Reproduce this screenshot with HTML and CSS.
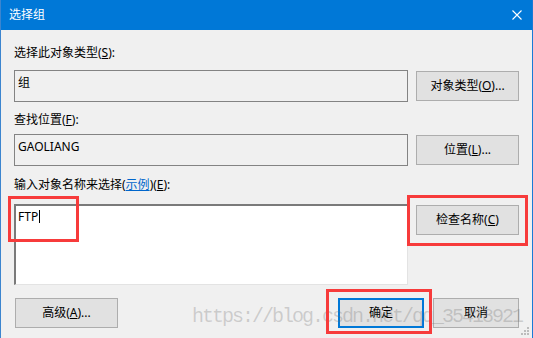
FILE: index.html
```html
<!DOCTYPE html>
<html lang="zh-CN">
<head>
    <meta charset="UTF-8">
    <title>选择组</title>
    <link rel="stylesheet" href="styles.css">
</head>
<body>
    <div class="dialog">
        <div class="titlebar">
            <span class="title">选择组</span>
            <svg class="close" width="10" height="10" viewBox="0 0 10 10">
                <path d="M0.5 0.5 L9.5 9.5 M9.5 0.5 L0.5 9.5" stroke="#fff" stroke-width="1.1" fill="none"/>
            </svg>
        </div>

        <div class="content">
            <div class="label label-first">选择此对象类型(<u>S</u>):</div>
            <div class="row">
                <div class="field">组</div>
                <button class="btn">对象类型(<u>O</u>)...</button>
            </div>

            <div class="label label-second">查找位置(<u>F</u>):</div>
            <div class="row">
                <div class="field">GAOLIANG</div>
                <button class="btn">位置(<u>L</u>)...</button>
            </div>

            <div class="label label-third">输入对象名称来选择(<a href="#">示例</a>)(<u>E</u>):</div>
            <div class="row">
                <div class="area"><span>FTP</span><span class="caret"></span></div>
                <button class="btn">检查名称(<u>C</u>)</button>
            </div>

            <div class="footer">
                <button class="btn btn-advanced">高级(<u>A</u>)...</button>
                <div class="footer-right">
                    <button class="btn btn-default">确定</button>
                    <button class="btn">取消</button>
                </div>
            </div>
        </div>

        <!-- overlays: watermark, annotation boxes, resize grip -->
        <div class="watermark">https://blog.csdn.net/qq_35418921</div>
        <div class="mark mark-ftp"></div>
        <div class="mark mark-check"></div>
        <div class="mark mark-ok"></div>
        <svg class="grip" width="9" height="9" viewBox="0 0 9 9">
            <rect x="6" y="0" width="2" height="2"/>
            <rect x="3" y="3" width="2" height="2"/>
            <rect x="6" y="3" width="2" height="2"/>
            <rect x="0" y="6" width="2" height="2"/>
            <rect x="3" y="6" width="2" height="2"/>
            <rect x="6" y="6" width="2" height="2"/>
        </svg>
    </div>
</body>
</html>
```

FILE: styles.css
```css
body {
    margin: 0;
    background: #f0f0f0;
    font-family: "Noto Sans", "Noto Sans CJK SC", sans-serif;
    font-size: 12px;
    color: #000;
}
.dialog {
    position: relative;
    width: 533px;
    height: 338px;
    box-sizing: border-box;
    border-left: 1px solid #3c85cf;
    border-right: 1px solid #1a7ad6;
    background: #f0f0f0;
    overflow: hidden;
}
.titlebar {
    height: 29px;
    background: #0078d7;
    display: flex;
    align-items: center;
    justify-content: space-between;
    padding: 0 11px 1px 9px;
    margin: 0 -1px;
}
.title {
    color: #fff;
    line-height: 16px;
}
.close {
    display: block;
}
.content {
    padding-left: 13px;
}
.label {
    line-height: 16px;
    height: 16px;
}
.label-first {
    margin-top: 15px;
    margin-bottom: 9px;
}
.label-second {
    margin-top: 10px;
    margin-bottom: 6px;
}
.label-third {
    margin-top: 11px;
    margin-bottom: 11px;
}
.label a {
    color: #0066cc;
}
.row {
    display: grid;
    grid-template-columns: 394px 103px;
    column-gap: 8px;
    align-items: start;
}
.field {
    height: 32px;
    box-sizing: border-box;
    border: 1px solid #838383;
    background: #f0f0f0;
    padding: 3px 3px 0;
    line-height: 18px;
}
.area {
    height: 81px;
    box-sizing: border-box;
    background: #fff;
    border-top: 2px solid #7a7a7a;
    border-left: 2px solid #7a7a7a;
    border-right: 1px solid #e3e3e3;
    border-bottom: 1px solid #e3e3e3;
    padding: 2px 2px 0;
    line-height: 18px;
}
.caret {
    display: inline-block;
    width: 1px;
    height: 13px;
    background: #000;
    vertical-align: -2px;
    margin-left: 1px;
}
.btn {
    height: 30px;
    margin-top: 1px;
    box-sizing: border-box;
    border: 1px solid #adadad;
    background: #e1e1e1;
    font-family: inherit;
    font-size: 12px;
    color: #000;
    padding: 0;
    line-height: 16px;
}
.footer {
    display: flex;
    justify-content: space-between;
    margin-top: 12px;
    width: 505px;
}
.btn-advanced {
    width: 103px;
    margin-left: 1px;
}
.footer-right {
    display: flex;
    gap: 9px;
}
.footer-right .btn {
    width: 86px;
}
.btn-default {
    border: 2px solid #0078d7;
}
.watermark {
    position: absolute;
    left: 191px;
    top: 305px;
    font-family: "Liberation Mono", monospace;
    font-size: 20px;
    letter-spacing: -2px;
    line-height: 24px;
    color: rgba(110, 110, 110, 0.28);
    white-space: nowrap;
}
.mark {
    position: absolute;
    border: 3px solid #f73b3b;
    box-sizing: border-box;
}
.mark-ftp {
    left: 7px;
    top: 196px;
    width: 71px;
    height: 46px;
}
.mark-check {
    left: 406px;
    top: 195px;
    width: 121px;
    height: 51px;
}
.mark-ok {
    left: 325px;
    top: 289px;
    width: 106px;
    height: 45px;
}
.grip {
    position: absolute;
    left: 520px;
    top: 327px;
    fill: #bcbcbc;
}
```
